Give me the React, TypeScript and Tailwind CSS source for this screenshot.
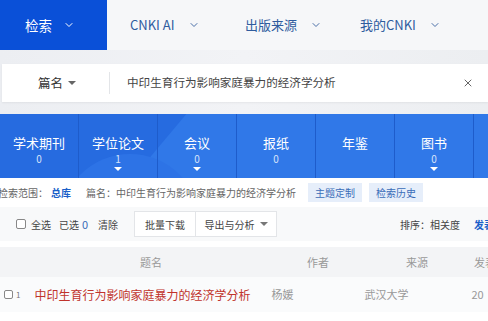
import React from 'react';
import { ChevronDown, X } from 'lucide-react';

const NAV = ['CNKI AI', '出版来源', '我的CNKI'];

const TABS = [
  { name: '学术期刊', count: '0', mark: false },
  { name: '学位论文', count: '1', mark: true },
  { name: '会议', count: '0', mark: true },
  { name: '报纸', count: '0', mark: false },
  { name: '年鉴', count: '', mark: false },
  { name: '图书', count: '0', mark: true },
];

const font = { fontFamily: '"Noto Sans CJK SC", "Noto Sans", sans-serif' };

function Caret({ className = '' }: { className?: string }) {
  return (
    <span
      className={`inline-block shrink-0 w-0 h-0 border-l-[4px] border-r-[4px] border-t-[4px] border-l-transparent border-r-transparent ${className}`}
    />
  );
}

export default function App() {
  return (
    <div className="w-[488px] h-[321px] overflow-hidden bg-white text-[12px] whitespace-nowrap" style={font}>
      {/* top nav */}
      <div className="flex h-[50px] bg-[#f6f7f9] items-center">
        <div className="w-[107px] h-full bg-[#0a50d8] flex items-center pl-[25px] gap-[11px] text-white text-[13.5px]">
          <span>检索</span>
          <ChevronDown size={12} strokeWidth={2} />
        </div>
        <div className="flex ml-[23px]">
          {NAV.map((n) => (
            <div key={n} className="w-[115px] shrink-0 flex items-center gap-[13px] text-[#2f5c9e] text-[13px]">
              <span>{n}</span>
              <ChevronDown size={12} strokeWidth={2} className="text-[#4a6fa8]" />
            </div>
          ))}
        </div>
      </div>

      {/* search */}
      <div className="h-[64px] bg-gradient-to-r from-[#eceef2] via-[#f2f3f6] to-[#eceef1] pt-[14px] pl-[2px]">
        <div className="h-[38px] bg-white flex items-center shadow-[0_1px_2px_rgba(0,0,0,0.06)]">
          <div className="w-[107px] flex items-center pl-[36px] gap-[5px] text-[#333] text-[12.5px]">
            <span>篇名</span>
            <Caret className="border-t-[#666]" />
          </div>
          <div className="w-px h-[22px] bg-[#e3e5e8]" />
          <div className="flex-1 pl-[17px] text-[#444] text-[11.6px]">中印生育行为影响家庭暴力的经济学分析</div>
          <X size={12} strokeWidth={2} className="text-[#666] mr-[14px]" />
        </div>
      </div>

      {/* database tabs */}
      <div className="relative h-[64px] bg-[#266be0] overflow-hidden flex">
        <div className="absolute left-[175px] top-[-120px] w-[420px] h-[420px] bg-[#3078e8] rotate-[40deg]" />
        <div className="absolute left-[60px] top-[40px] w-[140px] h-[140px] rounded-full bg-[#2d73e6]" />
        {TABS.map((t) => (
          <div
            key={t.name}
            className="relative flex flex-col items-center w-[79px] shrink-0 pt-[20px] border-r border-[#1e5ccb]"
          >
            <span className="text-white text-[13px] leading-[18px]">{t.name}</span>
            <span className="text-[#d6e3fb] text-[10px] leading-[12px] mt-[1px]">{t.count}</span>
            {t.mark && <Caret className="border-t-white mt-[2px]" />}
          </div>
        ))}
      </div>

      {/* range */}
      <div className="h-[29px] flex items-center text-[10px] text-[#666]">
        <span className="-ml-[2px]">检索范围：</span>
        <span className="ml-[3px] text-[#1a5fc9] font-bold">总库</span>
        <span className="ml-[15px]">篇名：中印生育行为影响家庭暴力的经济学分析</span>
        <span className="ml-[12px] w-[54px] h-[19px] flex items-center justify-center bg-[#e6eefa] text-[#3a6cb8] text-[10px]">主题定制</span>
        <span className="ml-[7px] w-[54px] h-[19px] flex items-center justify-center bg-[#e6eefa] text-[#3a6cb8] text-[10px]">检索历史</span>
      </div>

      {/* toolbar */}
      <div className="h-[34px] flex items-center bg-[#f8f9fa] text-[10px] text-[#444]">
        <span className="shrink-0 ml-[16px] w-[10px] h-[10px] border border-[#888] rounded-[2px] bg-white" />
        <span className="ml-[5px]">全选</span>
        <span className="ml-[8px]">已选</span>
        <span className="ml-[3px] text-[#3a6cb8] text-[11px]">0</span>
        <span className="ml-[10px]">清除</span>
        <div className="ml-[16px] flex h-[26px] border border-[#e3e5e8] bg-white">
          <span className="w-[61px] flex items-center justify-center border-r border-[#e3e5e8]">批量下载</span>
          <span className="w-[80px] flex items-center justify-center gap-[5px]">
            导出与分析
            <Caret className="border-t-[#777]" />
          </span>
        </div>
        <span className="ml-[123px] shrink-0">排序：相关度</span>
        <span className="ml-[14px] shrink-0 text-[#1a5fc9] font-bold">发表</span>
      </div>

      <div className="h-[6px]" />

      {/* table header */}
      <div className="h-[30px] flex items-center bg-[#f3f4f6] text-[11px] text-[#999]">
        <span className="shrink-0 ml-[140px]">题名</span>
        <span className="shrink-0 ml-[145px]">作者</span>
        <span className="shrink-0 ml-[77px]">来源</span>
        <span className="shrink-0 ml-[46px]">发表</span>
      </div>

      {/* row */}
      <div className="h-[35px] flex items-center bg-[#fafbfc] text-[11px]">
        <span className="shrink-0 ml-[4px] w-[9px] h-[9px] border border-[#888] rounded-[2px] bg-white" />
        <span className="shrink-0 ml-[3px] text-[#777] text-[8px] self-start mt-[12px]">1</span>
        <span className="shrink-0 ml-[14px] text-[#c0332b] text-[12px]">中印生育行为影响家庭暴力的经济学分析</span>
        <span className="shrink-0 ml-[21px] text-[#999]">杨媛</span>
        <span className="shrink-0 ml-[71px] text-[#999]">武汉大学</span>
        <span className="shrink-0 ml-[63px] text-[#999]">20</span>
      </div>
    </div>
  );
}
